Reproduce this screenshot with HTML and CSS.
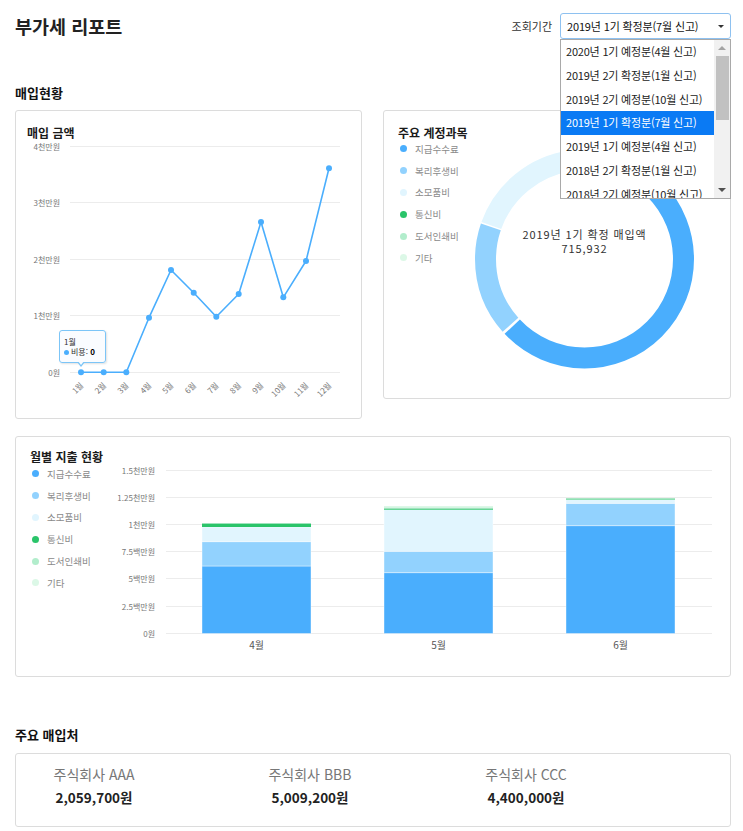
FILE: index.html
```html
<!DOCTYPE html>
<html lang="ko">
<head>
<meta charset="utf-8">
<title>부가세 리포트</title>
<link rel="stylesheet" href="styles.css">
</head>
<body>
<div class="page">
  <header class="page-head">
    <h1 class="page-title">부가세 리포트</h1>
    <div class="period">
      <span class="period-label">조회기간</span>
      <div class="period-select">
        <div class="select-box">
          <span>2019년 1기 확정분(7월 신고)</span>
          <span class="select-caret"></span>
        </div>
        <div class="select-list">
          <ul class="options">
            <li>2020년 1기 예정분(4월 신고)</li>
            <li>2019년 2기 확정분(1월 신고)</li>
            <li>2019년 2기 예정분(10월 신고)</li>
            <li class="is-active">2019년 1기 확정분(7월 신고)</li>
            <li>2019년 1기 예정분(4월 신고)</li>
            <li>2018년 2기 확정분(1월 신고)</li>
            <li>2018년 2기 예정분(10월 신고)</li>
          </ul>
          <div class="scrollbar">
            <span class="scroll-up"></span>
            <span class="scroll-track"><span class="scroll-thumb"></span></span>
            <span class="scroll-down"></span>
          </div>
        </div>
      </div>
    </div>
  </header>

  <h2 class="section-title">매입현황</h2>

  <div class="card-row">
    <section class="card card-line">
      <h3 class="card-title">매입 금액</h3>
      <svg class="line-chart" width="345" height="278" viewBox="0 0 345 278">
        <g class="grid">
          <line x1="54" y1="6.5" x2="324" y2="6.5"/>
          <line x1="54" y1="62.5" x2="324" y2="62.5"/>
          <line x1="54" y1="119.5" x2="324" y2="119.5"/>
          <line x1="54" y1="175.5" x2="324" y2="175.5"/>
          <line x1="54" y1="232.5" x2="324" y2="232.5"/>
        </g>
        <g class="axis-label" text-anchor="end">
          <text x="44" y="9.5">4천만원</text>
          <text x="44" y="65.5">3천만원</text>
          <text x="44" y="122.5">2천만원</text>
          <text x="44" y="178.5">1천만원</text>
          <text x="44" y="235.5">0원</text>
        </g>
        <polyline class="series" points="65,232.3 87.7,232.3 110.3,232.3 133,177.7 155,130 177.7,152.7 200.3,176.7 222.7,154 245,82 267.3,157.3 290,121 313,28.3"/>
        <g class="markers">
          <circle cx="65" cy="232.3" r="3"/>
          <circle cx="87.7" cy="232.3" r="3"/>
          <circle cx="110.3" cy="232.3" r="3"/>
          <circle cx="133" cy="177.7" r="3"/>
          <circle cx="155" cy="130" r="3"/>
          <circle cx="177.7" cy="152.7" r="3"/>
          <circle cx="200.3" cy="176.7" r="3"/>
          <circle cx="222.7" cy="154" r="3"/>
          <circle cx="245" cy="82" r="3"/>
          <circle cx="267.3" cy="157.3" r="3"/>
          <circle cx="290" cy="121" r="3"/>
          <circle cx="313" cy="28.3" r="3"/>
        </g>
        <g class="axis-label" text-anchor="end">
          <text transform="translate(68 246) rotate(-45)">1월</text>
          <text transform="translate(90.7 246) rotate(-45)">2월</text>
          <text transform="translate(113.3 246) rotate(-45)">3월</text>
          <text transform="translate(136 246) rotate(-45)">4월</text>
          <text transform="translate(158 246) rotate(-45)">5월</text>
          <text transform="translate(180.7 246) rotate(-45)">6월</text>
          <text transform="translate(203.3 246) rotate(-45)">7월</text>
          <text transform="translate(225.7 246) rotate(-45)">8월</text>
          <text transform="translate(248 246) rotate(-45)">9월</text>
          <text transform="translate(270.3 246) rotate(-45)">10월</text>
          <text transform="translate(293 246) rotate(-45)">11월</text>
          <text transform="translate(316 246) rotate(-45)">12월</text>
        </g>
      </svg>
      <div class="tooltip">
        <div>1월</div>
        <div><span class="tooltip-dot"></span>비용: <b>0</b></div>
      </div>
    </section>

    <section class="card card-donut">
      <h3 class="card-title">주요 계정과목</h3>
      <div class="donut-body">
        <ul class="legend">
          <li><span class="swatch c-fee"></span>지급수수료</li>
          <li><span class="swatch c-welfare"></span>복리후생비</li>
          <li><span class="swatch c-supply"></span>소모품비</li>
          <li><span class="swatch c-comm"></span>통신비</li>
          <li><span class="swatch c-print"></span>도서인쇄비</li>
          <li><span class="swatch c-etc"></span>기타</li>
        </ul>
        <svg class="donut" width="229" height="238" viewBox="0 0 229 238">
          <g transform="rotate(-90 114.5 119)" fill="none" stroke-width="21">
            <circle class="s-fee" cx="114.5" cy="119" r="99" stroke-dasharray="391.37 622.04" stroke-dashoffset="0"/>
            <circle class="s-welfare" cx="114.5" cy="119" r="99" stroke-dasharray="104.54 622.04" stroke-dashoffset="-393.96"/>
            <circle class="s-supply" cx="114.5" cy="119" r="99" stroke-dasharray="107.47 622.04" stroke-dashoffset="-499.88"/>
            <circle class="s-comm" cx="114.5" cy="119" r="99" stroke-dasharray="7.78 622.04" stroke-dashoffset="-608.22"/>
            <circle class="s-print" cx="114.5" cy="119" r="99" stroke-dasharray="3.11 622.04" stroke-dashoffset="-616.86"/>
            <circle class="s-etc" cx="114.5" cy="119" r="99" stroke-dasharray="1.38 622.04" stroke-dashoffset="-620.31"/>
          </g>
          <text class="donut-caption" x="114.5" y="99" text-anchor="middle">2019년 1기 확정 매입액</text>
          <text class="donut-caption" x="114.5" y="112.5" text-anchor="middle">715,932</text>
        </svg>
      </div>
    </section>
  </div>

  <section class="card card-bars">
    <h3 class="card-title">월별 지출 현황</h3>
    <div class="bars-body">
      <ul class="legend">
        <li><span class="swatch c-fee"></span>지급수수료</li>
        <li><span class="swatch c-welfare"></span>복리후생비</li>
        <li><span class="swatch c-supply"></span>소모품비</li>
        <li><span class="swatch c-comm"></span>통신비</li>
        <li><span class="swatch c-print"></span>도서인쇄비</li>
        <li><span class="swatch c-etc"></span>기타</li>
      </ul>
      <svg class="bar-chart" width="620" height="200" viewBox="0 0 620 200">
        <g class="grid">
          <line x1="66" y1="6.5" x2="612" y2="6.5"/>
          <line x1="66" y1="33.5" x2="612" y2="33.5"/>
          <line x1="66" y1="60.5" x2="612" y2="60.5"/>
          <line x1="66" y1="87.5" x2="612" y2="87.5"/>
          <line x1="66" y1="114.5" x2="612" y2="114.5"/>
          <line x1="66" y1="142.5" x2="612" y2="142.5"/>
          <line x1="66" y1="169.5" x2="612" y2="169.5"/>
        </g>
        <g class="axis-label" text-anchor="end">
          <text x="55" y="9.5">1.5천만원</text>
          <text x="55" y="36.5">1.25천만원</text>
          <text x="55" y="63.5">1천만원</text>
          <text x="55" y="90.5">7.5백만원</text>
          <text x="55" y="117.5">5백만원</text>
          <text x="55" y="145.5">2.5백만원</text>
          <text x="55" y="172.5">0원</text>
        </g>
        <!-- 4월 -->
        <g class="bar">
          <rect class="f-fee" x="102" y="102" width="109" height="67.5"/>
          <rect class="f-welfare" x="102" y="77.7" width="109" height="24.3"/>
          <rect class="f-supply" x="102" y="63" width="109" height="14.7"/>
          <rect class="f-comm thin" x="102" y="60" width="109" height="3"/>
          <rect class="f-print thin" x="102" y="59" width="109" height="1"/>
        </g>
        <!-- 5월 -->
        <g class="bar">
          <rect class="f-fee" x="284" y="108.7" width="109" height="60.8"/>
          <rect class="f-welfare" x="284" y="87.3" width="109" height="21.4"/>
          <rect class="f-supply" x="284" y="45.7" width="109" height="41.6"/>
          <rect class="f-comm thin" x="284" y="45" width="109" height="0.7"/>
          <rect class="f-print thin" x="284" y="43.5" width="109" height="1.5"/>
          <rect class="f-etc thin" x="284" y="42" width="109" height="1.5"/>
        </g>
        <!-- 6월 -->
        <g class="bar">
          <rect class="f-fee" x="466" y="61.7" width="109" height="107.8"/>
          <rect class="f-welfare" x="466" y="39.3" width="109" height="22.4"/>
          <rect class="f-supply" x="466" y="35.5" width="109" height="3.8"/>
          <rect class="f-comm thin" x="466" y="34.7" width="109" height="0.8"/>
          <rect class="f-print thin" x="466" y="34" width="109" height="0.7"/>
        </g>
        <g class="month-label" text-anchor="middle">
          <text x="156.5" y="184.5">4월</text>
          <text x="338.5" y="184.5">5월</text>
          <text x="520.5" y="184.5">6월</text>
        </g>
      </svg>
    </div>
  </section>

  <h2 class="section-title vendors-title">주요 매입처</h2>
  <div class="card vendors">
    <div class="vendor">
      <p class="vendor-name">주식회사 AAA</p>
      <p class="vendor-amount">2,059,700원</p>
    </div>
    <div class="vendor">
      <p class="vendor-name">주식회사 BBB</p>
      <p class="vendor-amount">5,009,200원</p>
    </div>
    <div class="vendor">
      <p class="vendor-name">주식회사 CCC</p>
      <p class="vendor-amount">4,400,000원</p>
    </div>
  </div>
</div>
</body>
</html>
```

FILE: styles.css
```css
* { box-sizing: border-box; }

html, body {
  margin: 0;
  background: #fff;
}

body {
  font-family: "Noto Sans CJK KR", "Noto Sans", sans-serif;
  color: #222;
}

.page {
  padding: 0 12px 0 15px;
}

/* ---------- header ---------- */
.page-head {
  display: flex;
  justify-content: space-between;
  align-items: center;
  height: 39px;
  padding-top: 13px;
}

.page-title {
  margin: 0;
  font-size: 18.5px;
  line-height: 26px;
  font-weight: 700;
  color: #222;
}

.period {
  display: flex;
  align-items: center;
  gap: 8px;
}

.period-label {
  font-size: 11px;
  color: #333;
}

.period-select {
  position: relative;
  width: 171px;
}

.select-box {
  display: flex;
  align-items: center;
  justify-content: space-between;
  height: 26px;
  padding: 0 5px 0 6px;
  border: 1px solid #8ec1f0;
  border-radius: 3px;
  background: #fff;
  font-size: 11px;
  letter-spacing: -0.15px;
  color: #111;
  white-space: nowrap;
}

.select-caret {
  width: 0;
  height: 0;
  margin-right: 1px;
  border-left: 3px solid transparent;
  border-right: 3px solid transparent;
  border-top: 3px solid #333;
}

.select-list {
  position: absolute;
  top: 100%;
  left: 0;
  z-index: 10;
  display: flex;
  width: 171px;
  height: 160px;
  border: 1px solid #a9a9a9;
  background: #fff;
  overflow: hidden;
}

.options {
  flex: 1;
  margin: 0;
  padding: 0;
  list-style: none;
}

.options li {
  height: 23.75px;
  line-height: 23.75px;
  padding-left: 5px;
  font-size: 11px;
  letter-spacing: -0.2px;
  color: #222;
  white-space: nowrap;
}

.options li.is-active {
  background: #0a7af4;
  color: #fff;
}

.scrollbar {
  display: flex;
  flex-direction: column;
  flex: none;
  width: 16px;
  background: #f1f1f1;
}

.scroll-up,
.scroll-down {
  display: flex;
  align-items: center;
  justify-content: center;
  height: 16px;
}

.scroll-up::before {
  content: "";
  border-left: 4px solid transparent;
  border-right: 4px solid transparent;
  border-bottom: 4px solid #a3a3a3;
}

.scroll-down::before {
  content: "";
  border-left: 4px solid transparent;
  border-right: 4px solid transparent;
  border-top: 4px solid #505050;
}

.scroll-track {
  flex: 1;
}

.scroll-thumb {
  display: block;
  width: 13px;
  height: 64px;
  margin-left: 2px;
  background: #c1c1c1;
}

/* ---------- sections & cards ---------- */
.section-title {
  margin: 45px 0 8px;
  font-size: 13px;
  line-height: 18px;
  font-weight: 700;
  color: #111;
}

.card {
  border: 1px solid #dcdcdc;
  border-radius: 3px;
  background: #fff;
}

.card-title {
  margin: 0;
  font-size: 12px;
  line-height: 15px;
  font-weight: 700;
  color: #1a1a1a;
}

.card-row {
  display: flex;
  align-items: flex-start;
  gap: 21px;
}

.card-line {
  position: relative;
  width: 347px;
  height: 309px;
  padding: 14px 11px 0;
}

.line-chart {
  display: block;
  margin: 0 -11px;
}

.card-donut {
  width: 348px;
  height: 289px;
  padding: 14px 14px 0;
}

.donut-body,
.bars-body {
  display: flex;
}

.legend {
  flex: none;
  width: 72px;
  margin: -2px 0 0;
  padding: 0;
  list-style: none;
}

.legend li {
  display: flex;
  align-items: center;
  height: 21.8px;
  font-size: 9.5px;
  color: #8a8a8a;
  white-space: nowrap;
}

.swatch {
  flex: none;
  width: 7px;
  height: 7px;
  margin: 0 8px 0 2px;
  border-radius: 50%;
}

.c-fee { background: #4aaefd; }
.c-welfare { background: #92d2fe; }
.c-supply { background: #e1f5fe; }
.c-comm { background: #2ac46a; }
.c-print { background: #b2edcc; }
.c-etc { background: #dcf8e7; }

.donut {
  display: block;
  flex: none;
}

.card-bars {
  height: 241px;
  margin-top: 17px;
  padding: 12px 10px 0 14px;
}

.card-bars .legend {
  width: 70px;
  margin-top: -1px;
}

.bar-chart {
  display: block;
  flex: none;
}

/* ---------- chart drawing ---------- */
.grid line {
  stroke: #ececec;
  stroke-width: 1;
}

.axis-label text {
  font-size: 8px;
  fill: #777;
}

.series {
  fill: none;
  stroke: #4aaefd;
  stroke-width: 1.6;
  stroke-linejoin: round;
}

.markers circle {
  fill: #4aaefd;
}

.donut-caption {
  font-size: 11px;
  letter-spacing: 0.9px;
  fill: #333;
}

.s-fee { stroke: #4aaefd; }
.s-welfare { stroke: #92d2fe; }
.s-supply { stroke: #e1f5fe; }
.s-comm { stroke: #2ac46a; }
.s-print { stroke: #b2edcc; }
.s-etc { stroke: #dcf8e7; }

.bar rect {
  stroke: #fff;
  stroke-opacity: 0.5;
  stroke-width: 0.8;
}

.bar rect.thin {
  stroke: none;
}

.f-fee { fill: #4aaefd; }
.f-welfare { fill: #92d2fe; }
.f-supply { fill: #e1f5fe; }
.f-comm { fill: #2ac46a; }
.f-print { fill: #9fe3bd; }
.f-etc { fill: #dcf8e7; }

.month-label text {
  font-size: 10px;
  fill: #555;
}

/* ---------- tooltip ---------- */
.tooltip {
  position: absolute;
  left: 43px;
  top: 219px;
  width: 47px;
  height: 33px;
  padding: 6px 0 0 4px;
  border: 1px solid #7cc5f7;
  border-radius: 3px;
  background: rgba(250, 252, 255, 0.96);
  box-shadow: 1px 1px 2px rgba(0, 0, 0, 0.12);
  font-size: 8px;
  line-height: 10px;
  color: #333;
  white-space: nowrap;
}

.tooltip::before,
.tooltip::after {
  content: "";
  position: absolute;
  left: 17px;
  top: 100%;
  border-left: 4px solid transparent;
  border-right: 4px solid transparent;
  border-top: 5px solid #7cc5f7;
}

.tooltip::after {
  left: 18px;
  margin-top: -1px;
  border-left-width: 3px;
  border-right-width: 3px;
  border-top: 4px solid #fafcff;
}

.tooltip-dot {
  display: inline-block;
  width: 5px;
  height: 5px;
  margin-right: 2px;
  border-radius: 50%;
  background: #4aaefd;
  vertical-align: 0;
}

.tooltip b {
  color: #000;
}

/* ---------- vendors ---------- */
.vendors-title {
  margin-top: 49px;
  margin-bottom: 9px;
}

.vendors {
  display: flex;
  gap: 76px;
  height: 74px;
  padding: 11px 8px 0;
}

.vendor {
  width: 140px;
  text-align: center;
}

.vendor-name {
  margin: 0;
  font-size: 14px;
  line-height: 18px;
  color: #777;
}

.vendor-amount {
  margin: 4px 0 0;
  font-size: 13.5px;
  line-height: 20px;
  font-weight: 700;
  color: #222;
}
```
